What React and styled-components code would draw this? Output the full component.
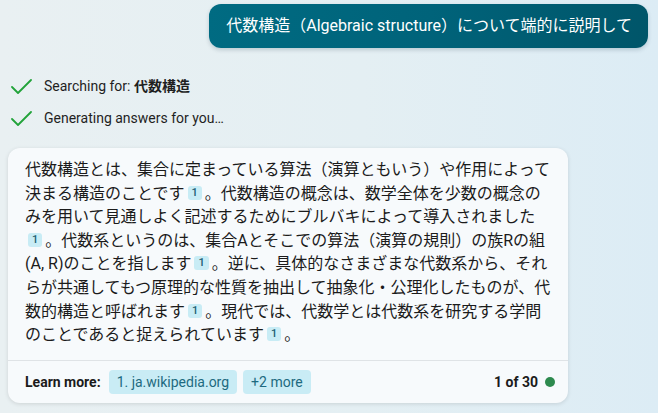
import React from 'react';
import styled, { createGlobalStyle } from 'styled-components';

const GlobalStyle = createGlobalStyle`
  html, body {
    margin: 0;
    padding: 0;
  }
  body {
    font-family: Roboto, "Noto Sans CJK JP", sans-serif;
    background: linear-gradient(90deg, #e9f0f2 0%, #e4eff3 55%, #dcecf5 100%);
    color: #1b1b1b;
  }
`;

const Page = styled.div`
  width: 658px;
  height: 413px;
  box-sizing: border-box;
  padding: 4px 10px 0 8px;
  display: flex;
  flex-direction: column;
  overflow: hidden;
`;

const UserRow = styled.div`
  display: flex;
  justify-content: flex-end;
`;

const UserBubble = styled.div`
  background: linear-gradient(100deg, #006b82 0%, #00637a 50%, #005569 100%);
  color: #ffffff;
  font-size: 16px;
  line-height: 24px;
  padding: 10px 16px 10px 17px;
  border-radius: 12px;
  box-shadow: 0 2px 4px rgba(0, 40, 60, 0.18);
`;

const StatusList = styled.div`
  display: flex;
  flex-direction: column;
  gap: 12px;
  margin-top: 28px;
  padding-left: 3px;
`;

const StatusItem = styled.div`
  display: flex;
  align-items: center;
  gap: 12px;
  font-size: 14px;
  line-height: 20px;
  color: #1f1f1f;
`;

const Strong = styled.b`
  font-weight: 700;
`;

const AnswerCard = styled.div`
  margin-top: 20px;
  width: 560px;
  background: #f7fafc;
  border-radius: 12px;
  box-shadow: 0 1px 4px rgba(0, 0, 0, 0.12);
  display: flex;
  flex-direction: column;
`;

const AnswerText = styled.div`
  padding: 10px 14px 13px 17px;
  font-size: 16px;
  line-height: 23.6px;
  width: 529px;
`;

const Cite = styled.span`
  display: inline-block;
  background: #c8ecf5;
  color: #1b5e72;
  font-family: Roboto, sans-serif;
  font-size: 11px;
  font-weight: 500;
  line-height: 14px;
  min-width: 5px;
  text-align: center;
  padding: 0 4px;
  margin: 0 3px;
  border-radius: 3px;
  vertical-align: 3px;
`;

const Footer = styled.div`
  border-top: 1px solid #dfe3e6;
  padding: 9px 13px 9px 17px;
  display: flex;
  align-items: center;
  gap: 6px;
  font-size: 14px;
`;

const LearnLabel = styled.span`
  font-weight: 700;
  margin-right: 2px;
`;

const SourcePill = styled.span`
  background: #c9ecf5;
  color: #1d6a80;
  height: 24px;
  line-height: 24px;
  padding: 0 8px;
  border-radius: 4px;
`;

const Counter = styled.div`
  margin-left: auto;
  display: flex;
  align-items: center;
  gap: 7px;
  font-weight: 700;
`;

const Dot = styled.span`
  width: 10px;
  height: 10px;
  border-radius: 50%;
  background: #2d8a4e;
`;

const Check = () => (
  <svg width="21" height="15" viewBox="0 0 21 15" fill="none">
    <polyline points="1,8 7,14 20,1" stroke="#22a33a" strokeWidth="1.8" strokeLinecap="round" strokeLinejoin="round" />
  </svg>
);

export default function App() {
  return (
    <>
      <GlobalStyle />
      <Page>
        <UserRow>
          <UserBubble>代数構造（Algebraic structure）について端的に説明して</UserBubble>
        </UserRow>
        <StatusList>
          <StatusItem>
            <Check />
            <span>Searching for: <Strong>代数構造</Strong></span>
          </StatusItem>
          <StatusItem>
            <Check />
            <span>Generating answers for you…</span>
          </StatusItem>
        </StatusList>
        <AnswerCard>
          <AnswerText>
            代数構造とは、集合に定まっている算法（演算ともいう）や作用によって決まる構造のことです<Cite>1</Cite>。代数構造の概念は、数学全体を少数の概念のみを用いて見通しよく記述するためにブルバキによって導入されました<Cite>1</Cite>。代数系というのは、集合Aとそこでの算法（演算の規則）の族Rの組(A, R)のことを指します<Cite>1</Cite>。逆に、具体的なさまざまな代数系から、それらが共通してもつ原理的な性質を抽出して抽象化・公理化したものが、代数的構造と呼ばれます<Cite>1</Cite>。現代では、代数学とは代数系を研究する学問のことであると捉えられています<Cite>1</Cite>。
          </AnswerText>
          <Footer>
            <LearnLabel>Learn more:</LearnLabel>
            <SourcePill>1. ja.wikipedia.org</SourcePill>
            <SourcePill>+2 more</SourcePill>
            <Counter>
              1 of 30
              <Dot />
            </Counter>
          </Footer>
        </AnswerCard>
      </Page>
    </>
  );
}
